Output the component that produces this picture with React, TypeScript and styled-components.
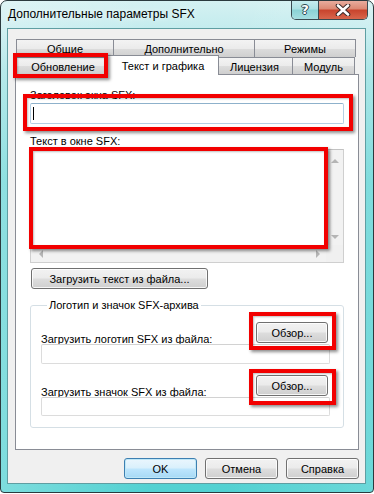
import React from "react";
import styled, { createGlobalStyle, css } from "styled-components";

const Global = createGlobalStyle`
  html, body { margin: 0; padding: 0; background: #ffffff; }
  body { font-family: "Liberation Sans", Arial, sans-serif; font-size: 11px; color: #000; }
  * { box-sizing: border-box; }
`;

const Window = styled.div`
  width: 374px;
  height: 493px;
  border: 1px solid #2b3a3e;
  border-radius: 7px 7px 4px 4px;
  background:
    linear-gradient(90deg, rgba(255,255,255,0.25), rgba(255,255,255,0) 40%, rgba(255,255,255,0) 60%, rgba(255,255,255,0.15)),
    linear-gradient(180deg, #d4f1f2 0px, #c4ecee 27px, #9fe2e3 70px, #6ad6d7 180px, #52d1d2 100%);
  display: flex;
  flex-direction: column;
  overflow: hidden;
`;

const TitleBar = styled.div`
  height: 27px;
  flex: none;
  display: flex;
  justify-content: space-between;
  align-items: flex-start;
`;

const Title = styled.div`
  padding-left: 7px;
  line-height: 27px;
  font-size: 12px;
  color: #000;
  text-shadow: 0 0 6px rgba(255,255,255,0.9);
`;

const CaptionButtons = styled.div`
  display: flex;
  margin: -1px 5px 0 0;
  border: 1px solid #3a4a50;
  border-top: none;
  border-radius: 0 0 5px 5px;
  overflow: hidden;
`;

const CaptionButton = styled.div<{ $kind: "help" | "close" }>`
  height: 19px;
  display: flex;
  align-items: center;
  justify-content: center;
  ${(p) =>
    p.$kind === "help"
      ? css`
          width: 27px;
          border-right: 1px solid #3a4a50;
          background: linear-gradient(180deg, #c9eef0 0%, #aee2e4 45%, #8cd3d6 55%, #a6dfe1 100%);
        `
      : css`
          width: 48px;
          background: linear-gradient(180deg, #eab1a3 0%, #dc8a75 45%, #c9452e 55%, #d8664c 100%);
        `}
`;

const HelpGlyph = styled.span`
  font-family: "DejaVu Sans", sans-serif;
  font-weight: bold;
  font-size: 13px;
  line-height: 1;
  color: #fff;
  text-shadow: -1px 0 #2c4a50, 1px 0 #2c4a50, 0 -1px #2c4a50, 0 1px #2c4a50;
`;

const Client = styled.div`
  flex: 1;
  margin: 0 7px 8px 6px;
  border: 1px solid #5f9ea2;
  background: #f0f0f0;
  padding: 10px 6px 0 7px;
  display: flex;
  flex-direction: column;
`;

const TabStrip = styled.div`
  position: relative;
  z-index: 2;
  display: flex;
  flex-direction: column;
`;

const TabRow = styled.div<{ $h: number }>`
  display: flex;
  padding-left: 1px;
  height: ${(p) => p.$h}px;
`;

const Tab = styled.div<{ $w: number; $active?: boolean }>`
  width: ${(p) => p.$w}px;
  height: 100%;
  flex: none;
  margin-right: -1px;
  border: 1px solid #898c95;
  border-bottom: none;
  background: linear-gradient(180deg, #f3f3f3 0%, #ebebeb 50%, #dddddd 50%, #cfcfcf 100%);
  display: flex;
  align-items: center;
  justify-content: center;
  padding-top: 1px;
  position: relative;
  ${(p) =>
    p.$active &&
    css`
      width: ${p.$w + 4}px;
      height: 20px;
      margin: -2px -3px 0 -2px;
      background: #ffffff;
      z-index: 3;
      padding-top: 0;
    `}
`;

const Page = styled.div`
  position: relative;
  z-index: 1;
  height: 376px;
  border: 1px solid #898c95;
  background: #ffffff;
  padding: 13px 14px 0 14px;
  display: flex;
  flex-direction: column;
`;

const Label = styled.div<{ $mt?: number }>`
  line-height: 15px;
  height: 15px;
  margin-top: ${(p) => p.$mt ?? 0}px;
  white-space: nowrap;
`;

const Annotated = styled.div`
  position: relative;
`;

const RedFrame = styled.div<{ $t: number; $r: number; $b: number; $l: number }>`
  position: absolute;
  top: ${(p) => p.$t}px;
  right: ${(p) => p.$r}px;
  bottom: ${(p) => p.$b}px;
  left: ${(p) => p.$l}px;
  border: 4px solid #f20000;
  box-shadow: 2px 2px 3px rgba(0, 0, 0, 0.45), inset 1px 1px 2px rgba(0, 0, 0, 0.25);
  pointer-events: none;
  z-index: 10;
`;

const Field = styled.div<{ $focused?: boolean; $h?: number }>`
  height: ${(p) => p.$h ?? 21}px;
  background: #ffffff;
  display: flex;
  align-items: center;
  padding-left: 2px;
  ${(p) =>
    p.$focused
      ? css`
          border: 1px solid #b5cfe3;
          border-top-color: #8eb1cb;
          border-radius: 2px;
        `
      : css`
          border: 1px solid #dcdcdc;
          border-top-color: #d2d2d2;
          border-radius: 2px;
        `}
`;

const Caret = styled.span`
  width: 1px;
  height: 13px;
  background: #000;
`;

const TextBox = styled.div`
  height: 114px;
  border: 1px solid #cfcfcf;
  border-top-color: #c2c2c2;
  background: #ffffff;
  display: grid;
  grid-template-columns: 1fr 17px;
  grid-template-rows: 1fr 17px;
`;

const ScrollBar = styled.div<{ $dir: "v" | "h" }>`
  display: flex;
  justify-content: space-between;
  align-items: center;
  ${(p) =>
    p.$dir === "v"
      ? css`
          flex-direction: column;
          padding: 9px 0 6px;
          background: linear-gradient(90deg, #e6e6e6 0%, #f2f2f2 30%, #f2f2f2 100%);
          border-left: 1px solid #f8f8f8;
        `
      : css`
          flex-direction: row;
          padding: 0 6px 0 8px;
          background: linear-gradient(180deg, #e6e6e6 0%, #f2f2f2 30%, #f2f2f2 100%);
        `}
`;

const Arrow = styled.span<{ $d: "up" | "down" | "left" | "right" }>`
  width: 0;
  height: 0;
  border: 4px solid transparent;
  ${(p) => p.$d === "up" && css`border-bottom-color: #b5b5b5; border-top-width: 0;`}
  ${(p) => p.$d === "down" && css`border-top-color: #b5b5b5; border-bottom-width: 0;`}
  ${(p) => p.$d === "left" && css`border-right-color: #b5b5b5; border-left-width: 0;`}
  ${(p) => p.$d === "right" && css`border-left-color: #b5b5b5; border-right-width: 0;`}
`;

const Corner = styled.div`
  background: #f0f0f0;
`;

const Button = styled.button<{ $w: number; $default?: boolean }>`
  width: ${(p) => p.$w}px;
  height: 21px;
  flex: none;
  padding: 0;
  font-family: "Liberation Sans", Arial, sans-serif;
  font-size: 11px;
  color: #000;
  border: 1px solid #707070;
  border-radius: 3px;
  background: linear-gradient(180deg, #f2f2f2 0%, #ebebeb 48%, #dddddd 52%, #cfcfcf 100%);
  box-shadow: inset 0 0 0 1px rgba(255, 255, 255, 0.8);
  ${(p) =>
    p.$default &&
    css`
      border-color: #3c7fb1;
      box-shadow: inset 0 0 0 1px #bfe7f7;
      background: linear-gradient(180deg, #eaf6fd 0%, #d9f0fc 48%, #bee6fd 52%, #a7d9f5 100%);
    `}
`;

const LoadButtonWrap = styled.div`
  margin-top: 5px;
  padding-left: 1px;
`;

const Group = styled.fieldset`
  margin: 9px 0 0 0;
  padding: 9px 13px 11px 10px;
  min-inline-size: 0;
  border: 1px solid #d5dfe5;
  border-radius: 3px;
  display: flex;
  flex-direction: column;
`;

const Legend = styled.legend`
  margin-left: 6px;
  padding: 0 2px;
  line-height: 15px;
`;

const FileBlock = styled.div<{ $mt?: number }>`
  display: flex;
  flex-direction: column;
  margin-top: ${(p) => p.$mt ?? 0}px;
`;

const FileRow = styled.div`
  height: 21px;
  display: flex;
  justify-content: space-between;
  align-items: flex-end;
  padding-right: 2px;
`;

const FileLabel = styled.span`
  line-height: 14px;
  margin-bottom: -3px;
  white-space: nowrap;
`;

const FileField = styled(Field)`
  margin-top: 1px;
  margin-right: 0;
`;

const DialogButtons = styled.div`
  display: flex;
  justify-content: flex-end;
  gap: 8px;
  margin-top: 8px;
`;

function CloseGlyph() {
  return (
    <svg width="16" height="12" viewBox="0 0 16 12">
      <path d="M3 1.5 L13 10.5 M13 1.5 L3 10.5" stroke="#3b2a28" strokeWidth="4.6" strokeLinecap="round" />
      <path d="M3 1.5 L13 10.5 M13 1.5 L3 10.5" stroke="#ffffff" strokeWidth="2.6" strokeLinecap="round" />
    </svg>
  );
}

export default function App() {
  return (
    <>
      <Global />
      <Window>
        <TitleBar>
          <Title>Дополнительные параметры SFX</Title>
          <CaptionButtons>
            <CaptionButton $kind="help">
              <HelpGlyph>?</HelpGlyph>
            </CaptionButton>
            <CaptionButton $kind="close">
              <CloseGlyph />
            </CaptionButton>
          </CaptionButtons>
        </TitleBar>
        <Client>
          <TabStrip>
            <TabRow $h={18}>
              <Tab $w={98}>Общие</Tab>
              <Tab $w={142}>Дополнительно</Tab>
              <Tab $w={102}>Режимы</Tab>
            </TabRow>
            <TabRow $h={17}>
              <Tab $w={94}>
                Обновление
                <RedFrame $t={-5} $r={1} $b={-4} $l={-4} />
              </Tab>
              <Tab $w={108} $active>
                Текст и графика
              </Tab>
              <Tab $w={77}>Лицензия</Tab>
              <Tab $w={63}>Модуль</Tab>
            </TabRow>
          </TabStrip>
          <Page>
            <Label>Заголовок окна SFX:</Label>
            <Annotated>
              <Field $focused>
                <Caret />
              </Field>
              <RedFrame $t={-9} $r={-9} $b={-7} $l={-7} />
            </Annotated>
            <Label $mt={10}>Текст в окне SFX:</Label>
            <Annotated>
              <TextBox>
                <div />
                <ScrollBar $dir="v">
                  <Arrow $d="up" />
                  <Arrow $d="down" />
                </ScrollBar>
                <ScrollBar $dir="h">
                  <Arrow $d="left" />
                  <Arrow $d="right" />
                </ScrollBar>
                <Corner />
              </TextBox>
              <RedFrame $t={-2} $r={16} $b={14} $l={-1} />
            </Annotated>
            <LoadButtonWrap>
              <Button $w={177}>Загрузить текст из файла...</Button>
            </LoadButtonWrap>
            <Group>
              <Legend>Логотип и значок SFX-архива</Legend>
              <FileBlock>
                <FileRow>
                  <FileLabel>Загрузить логотип SFX из файла:</FileLabel>
                  <Annotated>
                    <Button $w={72}>Обзор...</Button>
                    <RedFrame $t={-10} $r={-8} $b={-7} $l={-7} />
                  </Annotated>
                </FileRow>
                <FileField $h={20} />
              </FileBlock>
              <FileBlock $mt={11}>
                <FileRow>
                  <FileLabel>Загрузить значок SFX из файла:</FileLabel>
                  <Annotated>
                    <Button $w={72}>Обзор...</Button>
                    <RedFrame $t={-6} $r={-8} $b={-9} $l={-7} />
                  </Annotated>
                </FileRow>
                <FileField $h={19} />
              </FileBlock>
            </Group>
          </Page>
          <DialogButtons>
            <Button $w={73} $default>
              OK
            </Button>
            <Button $w={73}>Отмена</Button>
            <Button $w={73}>Справка</Button>
          </DialogButtons>
        </Client>
      </Window>
    </>
  );
}
